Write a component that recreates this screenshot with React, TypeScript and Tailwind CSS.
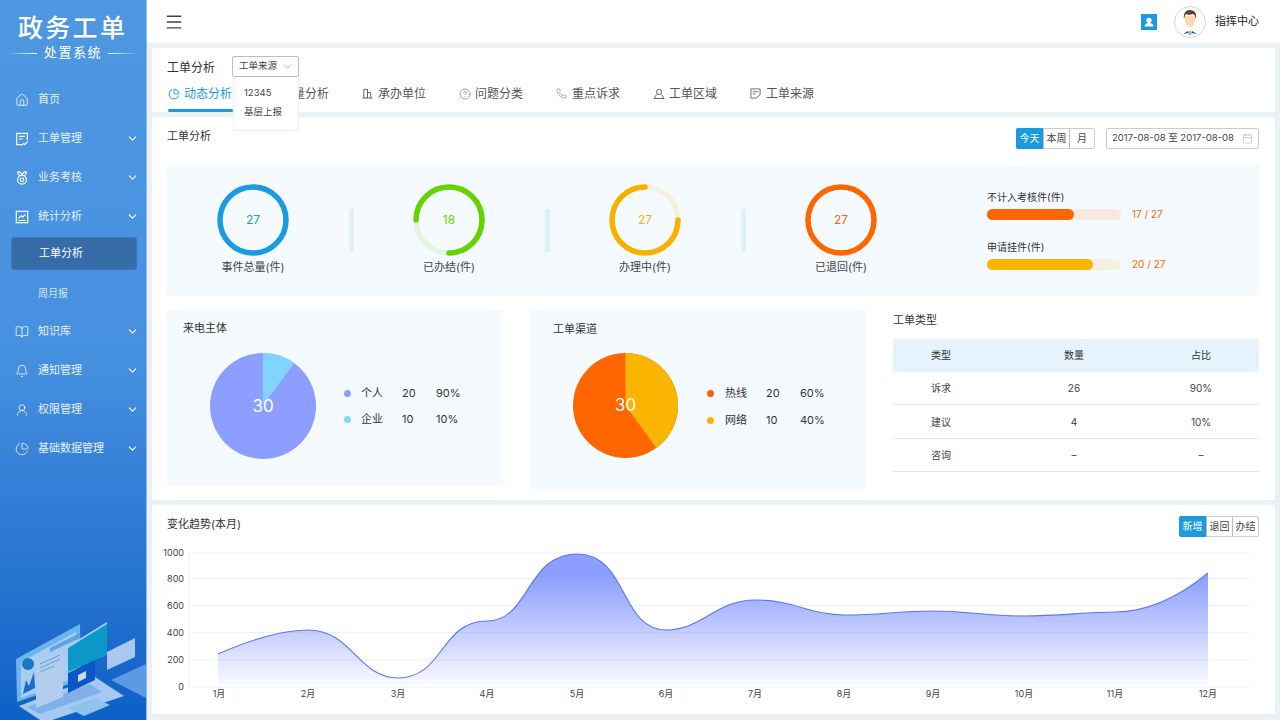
import { Bell, BookOpen, Calendar, ChartPie, ChevronDown, CircleHelp, House, Menu, Phone, UserRound } from "lucide-react";
import type { ReactNode } from "react";

const FileIcon = () => (
  <svg viewBox="0 0 16 16" className="h-[14px] w-[14px]" fill="none" stroke="currentColor" strokeWidth="1.3">
    <path d="M9 14.5H2V1.5h12v8" />
    <path d="M4.5 5h7M4.5 8h4.5M9 12.5l2 2 3.5-3.5" />
  </svg>
);

const MedalIcon = () => (
  <svg viewBox="0 0 16 16" className="h-[14px] w-[14px]" fill="none" stroke="currentColor" strokeWidth="1.3">
    <path d="M2.5 1l2.5 4.5M13.5 1L11 5.5M2.5 1h3l2.5 3 2.5-3h3" />
    <circle cx="8" cy="10" r="5" />
    <circle cx="8" cy="10" r="2" />
  </svg>
);

const StatsIcon = () => (
  <svg viewBox="0 0 16 16" className="h-[14px] w-[14px]" fill="none" stroke="currentColor" strokeWidth="1.4">
    <rect x="1.5" y="1.5" width="13" height="13" />
    <path d="M4 9.5l3-3 2 1.5 3-3M4 12h8" />
  </svg>
);

const menu: { label: string; icon: ReactNode; arrow?: boolean }[] = [
  { label: "首页", icon: <House size={14} strokeWidth={1.3} /> },
  { label: "工单管理", icon: <FileIcon />, arrow: true },
  { label: "业务考核", icon: <MedalIcon />, arrow: true },
  { label: "统计分析", icon: <StatsIcon />, arrow: true },
];

const menu2: { label: string; icon: ReactNode }[] = [
  { label: "知识库", icon: <BookOpen size={14} strokeWidth={1.3} /> },
  { label: "通知管理", icon: <Bell size={14} strokeWidth={1.3} /> },
  { label: "权限管理", icon: <UserRound size={14} strokeWidth={1.3} /> },
  { label: "基础数据管理", icon: <ChartPie size={14} strokeWidth={1.3} /> },
];

const MenuRow = ({ label, icon, arrow }: { label: string; icon: ReactNode; arrow?: boolean }) => (
  <div className="flex h-[39px] items-center pl-[15px] pr-[7px] text-[11px] text-[#e6f1fc]">
    <span className="flex w-[23px] text-white">{icon}</span>
    <span className="flex-1">{label}</span>
    {arrow && <ChevronDown size={13} strokeWidth={2} className="text-white" />}
  </div>
);

const Sidebar = () => (
  <aside className="relative flex h-[720px] w-[147px] shrink-0 flex-col overflow-hidden border-r border-[#8dbdee] bg-gradient-to-b from-[#4e98e2] via-[#4690e0] via-50% to-[#0d60c6]">
    <div className="mt-[12px] pl-[18px] text-[25px] font-medium leading-[32px] tracking-[2.3px] text-white">政务工单</div>
    <div className="mt-[1px] flex h-[16px] items-center">
      <span className="ml-[7px] h-px w-[30px] bg-gradient-to-r from-transparent to-white" />
      <span className="ml-[7px] text-[13px] tracking-[1.5px] text-white">处置系统</span>
      <span className="ml-[6px] h-px w-[31px] bg-gradient-to-r from-white to-transparent" />
    </div>
    <div className="mt-[19px] flex flex-col">
      {menu.map((m) => (
        <MenuRow key={m.label} {...m} />
      ))}
    </div>
    <div className="ml-[11px] mr-[9px] mt-[1px] flex h-[33px] items-center rounded-[3px] border border-[#3d76b4] bg-[#366ca8] pl-[27px] text-[11px] text-white">
      工单分析
    </div>
    <div className="flex h-[42px] items-center pl-[38px] pt-[4px] text-[10px] text-[#d4e6f9]">周月报</div>
    <div className="flex flex-col">
      {menu2.map((m) => (
        <MenuRow key={m.label} {...m} arrow />
      ))}
    </div>
    <svg viewBox="0 0 147 120" className="absolute bottom-0 left-0 h-[120px] w-[147px]">
      <polygon points="111,80 146,64 146,98" fill="#5d9ae6" />
      <polygon points="19,106 95,77 124,96 52,120 40,120" fill="#a5c9f2" />
      <polygon points="27,107 90,84 102,92 40,114" fill="#7fb0e8" />
      <polygon points="68,108 95,98 110,105 84,116" fill="#8fc3ee" />
      <polygon points="16,59 80,24 81,80 17,102" fill="#6cb5ee" />
      <polygon points="21,62 76,32 76,78 21,98" fill="#a9ccf1" />
      <circle cx="28" cy="64" r="6" fill="#1877c7" />
      <polygon points="23,94 26,80 29,86 34,72 35,88" fill="#1470c8" />
      <polygon points="50,48 80,33 80,38 50,52" fill="#5aa5e6" />
      <polygon points="36,62 63,50 63,97 36,108" fill="#b3cdee" />
      <path d="M40 64l20-9M40 68l20-9M40 72l14-6" stroke="#5b9ee8" strokeWidth="1" />
      <polygon points="68,48 107,23 107,55 68,72" fill="#0a98c8" />
      <polygon points="68,46 107,22 107,24 68,48" fill="#a9ccf1" />
      <polygon points="68,73 95,60 95,80 68,93" fill="#0d56c8" />
      <polygon points="78,75 86,71 86,78 78,82" fill="#c6d9f3" />
      <polygon points="107,52 135,38 135,57 107,70" fill="#a9c8ef" />
    </svg>
  </aside>
);

const Avatar = () => (
  <svg viewBox="0 0 32 32" className="h-[32px] w-[32px]">
    <circle cx="16" cy="16" r="15.5" fill="#fff" stroke="#d4d4d4" />
    <path d="M10.5 10c0 6 2 11 5.5 11s5.5-5 5.5-11z" fill="#fbd9b5" />
    <path d="M10 13c-1-6 2-9 6-9s7 3 6 9c-.5-3-2-4.500-3-5-2 1-6 1-7 0-1 1-1.500 3-2 5z" fill="#6b3d22" />
    <path d="M15 25h2l.5 4h-3z" fill="#6fb1ec" />
    <path d="M9 28l5-3 .5 2zM23 28l-5-3-.5 2z" fill="#444" />
  </svg>
);

const Header = () => (
  <header className="flex h-[43px] shrink-0 items-center bg-white pl-[17px] pr-[21px]">
    <Menu size={20} strokeWidth={1.7} className="text-[#444]" />
    <div className="ml-auto flex h-[16px] w-[16px] items-center justify-center bg-[#1a9ae0]">
      <svg viewBox="0 0 16 16" className="h-[14px] w-[14px]" fill="#fff">
        <circle cx="8" cy="6" r="3" />
        <path d="M3 13c0-3 2-4 5-4s5 1 5 4z" />
      </svg>
    </div>
    <div className="ml-[17px]">
      <Avatar />
    </div>
    <span className="ml-[9px] text-[11px] text-[#222]">指挥中心</span>
  </header>
);

const AreaIcon = () => (
  <svg viewBox="0 0 12 12" className="h-[12px] w-[12px]" fill="none" stroke="currentColor" strokeWidth="0.9">
    <circle cx="6" cy="4" r="2.500" />
    <path d="M3.500 6.500L1 10.500h10L8.500 6.500" />
  </svg>
);

const SourceIcon = () => (
  <svg viewBox="0 0 12 12" className="h-[11px] w-[11px]" fill="none" stroke="currentColor" strokeWidth="0.9">
    <path d="M6.500 11H1V1h10v6.500zM3 4h6M3 6.500h3" />
  </svg>
);

const UnitIcon = () => (
  <svg viewBox="0 0 12 12" className="h-[11px] w-[11px]" fill="none" stroke="currentColor" strokeWidth="1">
    <path d="M2 11V1.500h4V11M6 5h3.500v6M.5 11h11" />
  </svg>
);

const tabs: { label: string; icon: ReactNode }[] = [
  { label: "动态分析", icon: <ChartPie size={12} strokeWidth={1.9} /> },
  { label: "数量分析", icon: <ChartPie size={12} strokeWidth={1.1} /> },
  { label: "承办单位", icon: <UnitIcon /> },
  { label: "问题分类", icon: <CircleHelp size={12} strokeWidth={1.1} /> },
  { label: "重点诉求", icon: <Phone size={11} strokeWidth={1} /> },
  { label: "工单区域", icon: <AreaIcon /> },
  { label: "工单来源", icon: <SourceIcon /> },
];

const TopPanel = () => (
  <section className="relative mt-[5px] h-[64px] shrink-0 bg-white pl-[15px]">
    <div className="flex h-[29px] items-end">
      <span className="w-[65px] text-[12px] leading-[18px] text-[#333]">工单分析</span>
      <div className="flex h-[21px] w-[67px] items-center rounded-[2px] border border-[#bdbdbd] pl-[6px] text-[9.500px] text-[#444]">
        工单来源
        <ChevronDown size={13} strokeWidth={1} className="ml-[4px] text-[#777]" />
      </div>
    </div>
    <div className="ml-[1px] flex gap-[33px] pt-[7px]">
      {tabs.map((t, i) => (
        <div key={t.label} className={`relative flex h-[19px] w-[64px] items-center text-[12px] ${i === 0 ? "text-[#1a9ae0]" : "text-[#555]"}`}>
          <span className="flex w-[16px]">{t.icon}</span>
          {t.label}
          {i === 0 && <span className="absolute -bottom-[9px] left-0 h-[3px] w-[65px] rounded-sm bg-[#1a9ae0]" />}
        </div>
      ))}
    </div>
    <div className="absolute left-[81px] top-[29px] z-10 h-[54px] w-[66px] border border-t-0 border-[#e6f1f8] bg-white pl-[10px] pt-[6px] text-[9.500px] leading-[19px] text-[#444]">
      <div>12345</div>
      <div>基层上报</div>
    </div>
  </section>
);

const Seg = ({ items, widths }: { items: string[]; widths: string[] }) => (
  <div className="flex h-[21px] rounded-[2px] border border-[#ccc] text-[10px] text-[#444]">
    {items.map((t, i) => (
      <span
        key={t}
        className={`${widths[i]} flex items-center justify-center ${i === 0 ? "-my-px -ml-px h-[21px] rounded-l-[2px] bg-[#1a9ae0] text-white" : "border-l border-[#bbb] first:border-0"}`}
      >
        {t}
      </span>
    ))}
  </div>
);

const Ring = ({ value, color, track, arc }: { value: number; color: string; track: string; arc?: string }) => (
  <svg viewBox="0 0 72 72" className="h-[72px] w-[72px]">
    <circle cx="36" cy="36" r="33" fill="none" stroke={arc ? track : color} strokeWidth="5.500" />
    {arc && <path d={arc} fill="none" stroke={color} strokeWidth="5.500" strokeLinecap="round" />}
    <text x="36" y="40" textAnchor="middle" fontSize="12" fill={color}>
      {value}
    </text>
  </svg>
);

const rings = [
  { value: 27, color: "#1a9ae0", track: "#1a9ae0", label: "事件总量(件)" },
  { value: 18, color: "#66d200", track: "#e7f5df", label: "已办结(件)", arc: "M3 36A33 33 0 1 1 36 69" },
  { value: 27, color: "#f9b000", track: "#f5f0df", label: "办理中(件)", arc: "M36 3A33 33 0 1 0 69 36" },
  { value: 27, color: "#ff6600", track: "#ff6600", label: "已退回(件)" },
];

const Bar = ({ label, fill, color, track, text }: { label: string; fill: string; color: string; track: string; text: string }) => (
  <div>
    <div className="text-[10px] leading-[14px] text-[#333]">{label}</div>
    <div className="mt-[3px] flex items-center">
      <div className={`h-[11px] w-[134px] rounded-full ${track}`}>
        <div className={`h-full rounded-full ${fill} ${color}`} />
      </div>
      <span className="ml-[11px] text-[10px] text-[#ff6600]">{text}</span>
    </div>
  </div>
);

const StatsBox = () => (
  <div className="mt-[16px] flex h-[131px] bg-[#f5faff]">
    {rings.map((r, i) => (
      <div key={r.label} className="flex items-center">
        <div className="flex w-[172px] flex-col items-center pb-[2px]">
          <Ring value={r.value} color={r.color} track={r.track} arc={r.arc} />
          <span className="mt-[3px] text-[11px] leading-[16px] text-[#444]">{r.label}</span>
        </div>
        {i < 3 && <span className="ml-[10px] mr-[9px] h-[43px] w-[5px] bg-[#e1eff9]" />}
      </div>
    ))}
    <div className="ml-[60px] flex flex-col gap-[18px] pt-[25px]">
      <Bar label="不计入考核件(件)" fill="w-[87px]" color="bg-[#ff6600]" track="bg-[#f5e9e2]" text="17 / 27" />
      <Bar label="申请挂件(件)" fill="w-[106px]" color="bg-[#f9b500]" track="bg-[#f5f1e2]" text="20 / 27" />
    </div>
  </div>
);

const LegendRow = ({ dot, name, num, pct }: { dot: string; name: string; num: string; pct: string }) => (
  <>
    <span className={`h-[7px] w-[7px] rounded-full ${dot}`} />
    <span>{name}</span>
    <span>{num}</span>
    <span>{pct}</span>
  </>
);

const PieText = () => (
  <text x="53" y="59" textAnchor="middle" fontSize="17" fill="#fff">
    30
  </text>
);

const PieCards = () => (
  <div className="mt-[14px] flex items-start">
    <div className="h-[175px] w-[336px] bg-[#f5faff] pl-[16px] pt-[10px]">
      <div className="text-[11px] leading-[16px] text-[#333]">来电主体</div>
      <div className="ml-[26.500px] mt-[17px] flex items-center">
        <svg viewBox="0 0 106 106" className="h-[106px] w-[106px]">
          <circle cx="53" cy="53" r="53" fill="#8c9eff" />
          <path d="M53 53V0A53 53 0 0 1 84.200 10.100z" fill="#81d4fd" />
          <PieText />
        </svg>
        <div className="ml-[28.500px] grid grid-cols-[17px_41px_34px_auto] items-center gap-y-[10px] text-[11px] leading-[16px] text-[#333]">
          <LegendRow dot="bg-[#8c9eff]" name="个人" num="20" pct="90%" />
          <LegendRow dot="bg-[#81d4fd]" name="企业" num="10" pct="10%" />
        </div>
      </div>
    </div>
    <div className="ml-[27px] h-[179px] w-[336px] bg-[#f5faff] pl-[23px] pt-[11px]">
      <div className="text-[11px] leading-[16px] text-[#333]">工单渠道</div>
      <div className="ml-[20px] mt-[16px] flex items-center">
        <svg viewBox="0 0 106 106" className="h-[105px] w-[105px]">
          <circle cx="53" cy="53" r="53" fill="#ff6600" />
          <path d="M53 53V0A53 53 0 0 1 84.200 95.900z" fill="#f9b500" />
          <PieText />
        </svg>
        <div className="ml-[29px] mt-[2px] grid grid-cols-[18px_41px_34px_auto] items-center gap-y-[11px] text-[11px] leading-[16px] text-[#333]">
          <LegendRow dot="bg-[#ff5f0a]" name="热线" num="20" pct="60%" />
          <LegendRow dot="bg-[#f9b500]" name="网络" num="10" pct="40%" />
        </div>
      </div>
    </div>
    <div className="ml-[27px] w-[366px]">
      <div className="pt-[2px] text-[11px] leading-[16px] text-[#333]">工单类型</div>
      <div className="mt-[11px] grid h-[33px] grid-cols-[96px_170px_84px] items-center bg-[#e6f3fc] text-center text-[10px] text-[#333]">
        <span>类型</span>
        <span>数量</span>
        <span>占比</span>
      </div>
      {[
        ["诉求", "26", "90%"],
        ["建议", "4", "10%"],
        ["咨询", "–", "–"],
      ].map((row) => (
        <div key={row[0]} className="grid h-[33.400px] grid-cols-[96px_170px_84px] items-center border-b border-[#e6e6e6] pt-[1px] text-center text-[10px] text-[#444]">
          {row.map((c, i) => (
            <span key={i}>{c}</span>
          ))}
        </div>
      ))}
    </div>
  </div>
);

const linePath =
  "M218 654C250 640 280 630 308 630C352 630 358 678 398 678C444 678 440 621 487 621C530 621 526 554 577 554C628 554 620 630 666 630C702 630 716 600 755 600C795 600 810 615 844 615C880 615 900 611 933 611C966 611 990 616 1024 616C1060 616 1085 612 1115 612C1150 612 1180 596 1208 573";

const yTicks = [
  ["1000", 553],
  ["800", 578.500],
  ["600", 605.500],
  ["400", 632.500],
  ["200", 660],
  ["0", 687],
] as const;

const months = [219, 308, 398, 487, 577, 666, 755, 844, 933, 1024, 1115, 1208];

const TrendChart = () => (
  <svg viewBox="152 540 1123 165" className="mt-[3px] block h-[165px] w-[1123px]">
    <defs>
      <linearGradient id="area" gradientUnits="userSpaceOnUse" x1="0" y1="575" x2="0" y2="687">
        <stop offset="0" stopColor="#8c9eff" />
        <stop offset="1" stopColor="#8c9eff" stopOpacity="0.03" />
      </linearGradient>
    </defs>
    {yTicks.map(([t, y]) => (
      <g key={t}>
        <line x1="189" x2="1250" y1={y} y2={y} stroke="#eef0f3" />
        <text x="184" y={y + 3} textAnchor="end" fontSize="9" fill="#444">
          {t}
        </text>
      </g>
    ))}
    <line x1="189" x2="189" y1="553" y2="687" stroke="#eef0f3" />
    <path d={`${linePath}V685H218Z`} fill="url(#area)" />
    <path d={linePath} fill="none" stroke="#5a78f0" strokeWidth="1.100" />
    {months.map((x, i) => (
      <text key={x} x={x} y="697" textAnchor="middle" fontSize="9" fill="#444">
        {i + 1}月
      </text>
    ))}
  </svg>
);

export default function App() {
  return (
    <div className="flex h-[720px] w-[1280px] overflow-hidden bg-[#e9f1f5] font-[Inter,'Noto_Sans_CJK_SC',sans-serif]">
      <Sidebar />
      <main className="flex w-[1133px] flex-col">
        <Header />
        <div className="flex flex-col gap-[5px] px-[5px]">
          <TopPanel />
          <section className="h-[383px] shrink-0 bg-white pl-[15px] pr-[16px] pt-[11px]">
            <div className="flex h-[21px] items-start">
              <span className="mt-[1px] text-[11px] leading-[15px] text-[#333]">工单分析</span>
              <div className="ml-auto">
                <Seg items={["今天", "本周", "月"]} widths={["w-[27px]", "w-[26px]", "w-[25px]"]} />
              </div>
              <div className="ml-[11px] flex h-[21px] w-[153px] items-center rounded-[2px] border border-[#ccc] pl-[5px] text-[9.500px] text-[#444]">
                2017-08-08 至 2017-08-08
                <Calendar size={11} strokeWidth={1} className="ml-auto mr-[5px] text-[#999]" />
              </div>
            </div>
            <StatsBox />
            <PieCards />
          </section>
          <section className="h-[209px] shrink-0 bg-white pt-[11px]">
            <div className="flex h-[21px] items-start pl-[15px] pr-[16px]">
              <span className="mt-[1px] text-[11px] leading-[15px] text-[#333]">变化趋势(本月)</span>
              <div className="ml-auto">
                <Seg items={["新增", "退回", "办结"]} widths={["w-[27px]", "w-[26px]", "w-[26px]"]} />
              </div>
            </div>
            <TrendChart />
          </section>
        </div>
      </main>
    </div>
  );
}
